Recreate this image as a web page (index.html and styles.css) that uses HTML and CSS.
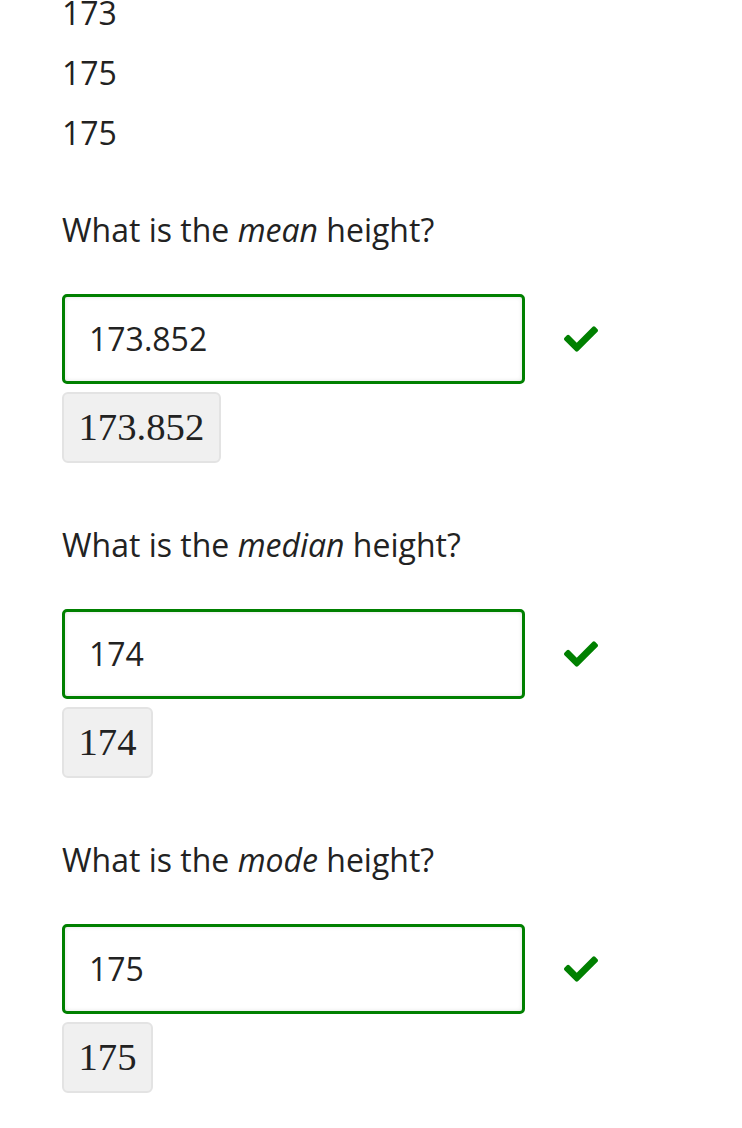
FILE: index.html
```html
<!DOCTYPE html>
<html lang="en">
<head>
<meta charset="utf-8">
<title>Heights</title>
<link rel="stylesheet" href="styles.css">
</head>
<body>
<main class="page">
  <div class="values">
    <div class="value">173</div>
    <div class="value">175</div>
    <div class="value">175</div>
  </div>

  <section class="question">
    <p class="prompt">What is the <em>mean</em> height?</p>
    <div class="answer-row">
      <input class="answer" type="text" value="173.852">
      <svg class="check" viewBox="0 0 512 512" aria-hidden="true"><path d="M173.898 439.404l-166.4-166.4c-9.997-9.997-9.997-26.206 0-36.204l36.203-36.204c9.997-9.998 26.207-9.998 36.204 0L192 312.69 432.095 72.596c9.997-9.997 26.207-9.997 36.204 0l36.203 36.204c9.997 9.997 9.997 26.206 0 36.204l-294.4 294.401c-9.998 9.997-26.207 9.997-36.204-.001z"/></svg>
    </div>
    <div class="preview">173.852</div>
  </section>

  <section class="question">
    <p class="prompt">What is the <em>median</em> height?</p>
    <div class="answer-row">
      <input class="answer" type="text" value="174">
      <svg class="check" viewBox="0 0 512 512" aria-hidden="true"><path d="M173.898 439.404l-166.4-166.4c-9.997-9.997-9.997-26.206 0-36.204l36.203-36.204c9.997-9.998 26.207-9.998 36.204 0L192 312.69 432.095 72.596c9.997-9.997 26.207-9.997 36.204 0l36.203 36.204c9.997 9.997 9.997 26.206 0 36.204l-294.4 294.401c-9.998 9.997-26.207 9.997-36.204-.001z"/></svg>
    </div>
    <div class="preview">174</div>
  </section>

  <section class="question">
    <p class="prompt">What is the <em>mode</em> height?</p>
    <div class="answer-row">
      <input class="answer" type="text" value="175">
      <svg class="check" viewBox="0 0 512 512" aria-hidden="true"><path d="M173.898 439.404l-166.4-166.4c-9.997-9.997-9.997-26.206 0-36.204l36.203-36.204c9.997-9.998 26.207-9.998 36.204 0L192 312.69 432.095 72.596c9.997-9.997 26.207-9.997 36.204 0l36.203 36.204c9.997 9.997 9.997 26.206 0 36.204l-294.4 294.401c-9.998 9.997-26.207 9.997-36.204-.001z"/></svg>
    </div>
    <div class="preview">175</div>
  </section>
</main>
</body>
</html>
```

FILE: styles.css
```css
html, body {
  margin: 0;
  padding: 0;
  background: #ffffff;
}

body {
  font-family: "Open Sans", "Noto Sans", sans-serif;
  font-size: 32px;
  color: #222222;
  overflow: hidden;
}

.page {
  margin-top: -17px;
  padding-left: 62px;
}

.values {
  margin-bottom: 43px;
}

.value {
  line-height: 60px;
}

.question {
  margin-bottom: 58.5px;
}

.prompt {
  margin: 0;
  line-height: 48px;
}

.prompt em {
  font-style: italic;
}

.answer-row {
  display: flex;
  align-items: center;
  gap: 39px;
  margin-top: 39.5px;
}

.answer {
  box-sizing: border-box;
  width: 463px;
  height: 90px;
  margin: 0;
  padding: 0 24px;
  border: 3px solid #008000;
  border-radius: 5px;
  box-shadow: inset 0 0 4px rgba(0, 0, 0, 0.12);
  font-family: "Open Sans", "Noto Sans", sans-serif;
  font-size: 32px;
  color: #222222;
  background: #ffffff;
  outline: none;
}

.check {
  width: 34px;
  height: 34px;
  fill: #008000;
  flex: none;
}

.preview {
  box-sizing: border-box;
  display: inline-flex;
  align-items: center;
  height: 71px;
  margin-top: 8px;
  padding: 0 14.5px;
  border: 2px solid #e3e3e3;
  border-radius: 6px;
  background: #f0f0f0;
  font-family: "Liberation Serif", "Times New Roman", serif;
  font-size: 38.7px;
  color: #222222;
}
```
